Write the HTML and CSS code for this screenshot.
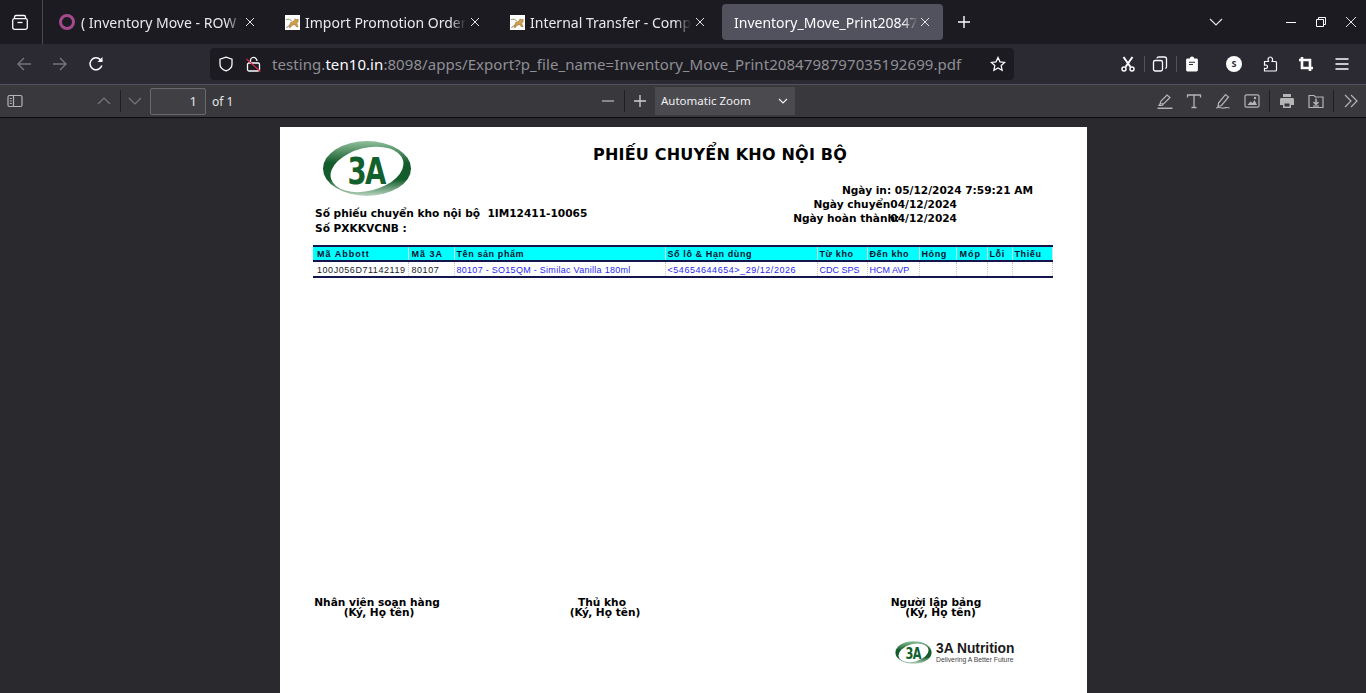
FILE: index.html
```html
<!DOCTYPE html>
<html lang="en">
<head>
  <meta charset="UTF-8" />
  <meta name="viewport" content="width=device-width, initial-scale=1" />
  <title>Inventory_Move_Print2084798797035192699.pdf</title>
  <link rel="stylesheet" href="styles.css">
</head>
<body>
  <svg class="defs" width="0" height="0">
    <defs>
      <symbol id="tomcat" viewBox="0 0 16 16">
        <rect width="16" height="16" fill="#fff"/>
        <path d="M1.500 13.500l3.500-2.500 1-3 3-1 2-3 1 1 2-.5v2.500l-1.500 2 1.500 3.500h-2l-1.500-2.500-3 1-2 2.500H4.500l1-2.500-2 1z" fill="#d3a04a" stroke="#7a5a24" stroke-width=".5"/>
        <path d="M1 5c3-1 5-.5 6 1.500" fill="none" stroke="#8a9460" stroke-width="1"/>
      </symbol>
      <linearGradient id="swoosh" x1="0" y1="0" x2="0" y2="1">
        <stop offset="0" stop-color="#8fbf9b"/>
        <stop offset=".4" stop-color="#145c2b"/>
        <stop offset=".7" stop-color="#145c2b"/>
        <stop offset="1" stop-color="#b9d6c0"/>
      </linearGradient>
      <symbol id="logo3a" viewBox="0 0 92 58">
        <ellipse cx="46" cy="29" rx="45" ry="28" fill="url(#swoosh)"/>
        <ellipse cx="46" cy="30" rx="38" ry="22" fill="#fff" transform="rotate(-14 46 30)"/>
        <text transform="translate(45 45) scale(.94 1.28)" class="logo-mark" text-anchor="middle">3A</text>
      </symbol>
    </defs>
  </svg>

  <header class="tabbar">
    <div class="tab-view">
      <svg class="ico" viewBox="0 0 16 16" fill="none" stroke="currentColor" stroke-width="1.300"><path d="M2.500 4.500V3c0-.9.600-1.500 1.500-1.500h8c.9 0 1.500.6 1.500 1.500v1.500"/><rect x=".7" y="4.700" width="14.600" height="10.600" rx="1.800"/><path d="M5.500 8.500h5"/></svg>
    </div>
    <div class="tabs">
      <div class="tab">
        <span class="ring"></span>
        <span class="tab-title">( Inventory Move - ROW )</span>
        <svg class="tab-x" viewBox="0 0 10 10"><path d="M1 1l8 8M9 1l-8 8"/></svg>
      </div>
      <div class="tab">
        <svg class="favicon"><use href="#tomcat"/></svg>
        <span class="tab-title">Import Promotion Order</span>
        <svg class="tab-x" viewBox="0 0 10 10"><path d="M1 1l8 8M9 1l-8 8"/></svg>
      </div>
      <div class="tab">
        <svg class="favicon"><use href="#tomcat"/></svg>
        <span class="tab-title">Internal Transfer - Compl</span>
        <svg class="tab-x" viewBox="0 0 10 10"><path d="M1 1l8 8M9 1l-8 8"/></svg>
      </div>
      <div class="tab active">
        <span class="tab-title">Inventory_Move_Print2084798</span>
        <svg class="tab-x" viewBox="0 0 10 10"><path d="M1 1l8 8M9 1l-8 8"/></svg>
      </div>
      <svg class="new-tab" viewBox="0 0 14 14" fill="none" stroke="currentColor" stroke-width="1.400"><path d="M7 1v12M1 7h12"/></svg>
    </div>
    <svg class="tab-list" viewBox="0 0 14 10" fill="none" stroke="currentColor" stroke-width="1.200"><path d="M1 2l6 6 6-6"/></svg>
    <div class="win-btns">
      <svg viewBox="0 0 12 12" fill="none" stroke="currentColor"><path d="M1 6.500h10"/></svg>
      <svg viewBox="0 0 12 12" fill="none" stroke="currentColor"><path d="M1.500 3.500h7v7h-7zM3.500 3.500v-2h7v7h-2"/></svg>
      <svg viewBox="0 0 12 12" fill="none" stroke="currentColor" stroke-width=".9"><path d="M1 1l10 10M11 1L1 11"/></svg>
    </div>
  </header>

  <nav class="navbar">
    <div class="nav-arrows">
      <svg class="ico dim" viewBox="0 0 16 16" fill="none" stroke="currentColor" stroke-width="1.400"><path d="M15 8H2M8 2L2 8l6 6"/></svg>
      <svg class="ico dim" viewBox="0 0 16 16" fill="none" stroke="currentColor" stroke-width="1.400"><path d="M1 8h13M8 2l6 6-6 6"/></svg>
      <svg class="ico" viewBox="0 0 16 16" fill="none" stroke="currentColor" stroke-width="1.500"><path d="M13.800 9.500A6 6 0 1 1 12.300 3.600L14 5.200"/><path d="M14.500 1v5h-5" fill="currentColor" stroke="none"/></svg>
    </div>
    <div class="urlbar">
      <svg class="ico" viewBox="0 0 16 16" fill="none" stroke="currentColor" stroke-width="1.300"><path d="M8 1.200l6 2v5c0 3.400-2.600 5.500-6 6.600-3.400-1.100-6-3.200-6-6.600v-5z"/></svg>
      <svg class="ico lock" viewBox="0 0 16 16" fill="none" stroke="currentColor" stroke-width="1.300"><rect x="1.500" y="7" width="12" height="8" rx="1.500"/><path d="M4.500 7V4.500a3 3 0 0 1 5.500-1.800c.6.600 1 1.500 1 2.300"/><path d="M.5 3l14 12.500" stroke="#e22850" stroke-width="1.200"/></svg>
      <span class="url"><span class="muted">testing.</span>ten10.in<span class="muted">:8098/apps/Export?p_file_name=Inventory_Move_Print2084798797035192699.pdf</span></span>
      <svg class="ico star" viewBox="0 0 16 16" fill="none" stroke="currentColor" stroke-width="1.300"><path d="M8 1.500l2 4.300 4.700.6-3.500 3.200.9 4.700L8 12l-4.100 2.300.9-4.700L1.300 6.400 6 5.800z"/></svg>
    </div>
    <div class="nav-tools">
      <svg class="ico" viewBox="0 0 16 16" fill="none" stroke="currentColor" stroke-width="1.500"><path d="M3.500 1l7 10M12.500 1l-7 10" stroke-width="2"/><circle cx="4" cy="13" r="2"/><circle cx="12" cy="13" r="2"/></svg>
      <span class="sep"></span>
      <svg class="ico" viewBox="0 0 16 16" fill="none" stroke="currentColor" stroke-width="1.300"><rect x="1.500" y="4.500" width="9" height="10.500" rx="1.800"/><path d="M5 2.500c0-1 .7-1.500 1.500-1.500h6c1.200 0 2 .8 2 2v8c0 .8-.5 1.300-1.200 1.500"/></svg>
      <span class="sep"></span>
      <svg class="ico" viewBox="0 0 16 16"><path d="M3.500 2.500h2.300C6 1.300 6.800.6 8 .6s2 .7 2.200 1.900h2.300c.8 0 1.400.6 1.400 1.400v10.200c0 .8-.6 1.400-1.400 1.400h-9c-.8 0-1.400-.6-1.400-1.400V3.900c0-.8.600-1.400 1.400-1.400z" fill="currentColor"/><path d="M5 6.200h6M5 8.500h4" stroke="#2b2a33" stroke-width="1.100"/></svg>
      <span class="avatar">S</span>
      <svg class="ico" viewBox="0 0 16 16" fill="none" stroke="currentColor" stroke-width="1.200"><path d="M2.500 15v-2.700c2 .6 3-.4 3-1.600S4.500 8.600 2.500 9.200V5.500H6.500C5.500 3.500 6.300 1 8.300 1s2.800 2.500 1.800 4.500h3.400c.6 0 1 .4 1 1V14c0 .6-.4 1-1 1z"/></svg>
      <svg class="ico" viewBox="0 0 16 16" fill="none" stroke="currentColor" stroke-width="2.600"><path d="M1 4h11v11M4 1v11h11"/></svg>
      <svg class="ico" viewBox="0 0 16 16" fill="none" stroke="currentColor" stroke-width="1.400"><path d="M1.500 3h13M1.500 8h13M1.500 13h13"/></svg>
    </div>
  </nav>

  <div class="pdf-toolbar">
    <div class="pager">
      <svg class="ico tool" viewBox="0 0 16 16" fill="none" stroke="currentColor" stroke-width="1.200"><rect x="1" y="2.500" width="14" height="11" rx="1.500"/><path d="M6.500 2.500v11M2.800 5.500h2M2.800 8h2M2.800 10.500h2"/></svg>
      <svg class="ico faint up-btn" viewBox="0 0 16 16" fill="none" stroke="currentColor" stroke-width="1.200"><path d="M2 11l6-6 6 6"/></svg>
      <span class="sep dark"></span>
      <svg class="ico faint" viewBox="0 0 16 16" fill="none" stroke="currentColor" stroke-width="1.200"><path d="M2 5l6 6 6-6"/></svg>
      <span class="page-input">1</span>
      <span class="page-of">of 1</span>
    </div>
    <div class="zoom">
      <svg class="ico tool" viewBox="0 0 16 16" fill="none" stroke="currentColor" stroke-width="1.300"><path d="M2 8h12"/></svg>
      <span class="sep dark"></span>
      <svg class="ico plus" viewBox="0 0 16 16" fill="none" stroke="currentColor" stroke-width="1.300"><path d="M2 8h12M8 2v12"/></svg>
      <div class="zoom-select">
        <span>Automatic Zoom</span>
        <svg viewBox="0 0 10 6" fill="none" stroke="currentColor" stroke-width="1.200"><path d="M1 1l4 4 4-4"/></svg>
      </div>
    </div>
    <div class="tools">
      <svg class="ico tool" viewBox="0 0 16 16" fill="none" stroke="currentColor" stroke-width="1.200"><path d="M3 11l1-3 6-6 3 2.500-6 6z"/><path d="M3 11l-1 1.500h3L6.500 11"/><path d="M.5 15.300h15" stroke-width="1.500"/></svg>
      <svg class="ico tool" viewBox="0 0 16 16" fill="none" stroke="currentColor" stroke-width="1.300"><path d="M1.500 4.500V2h13v2.500M8 2v12.500M5.500 14.500h5"/></svg>
      <svg class="ico tool" viewBox="0 0 16 16" fill="none" stroke="currentColor" stroke-width="1.200"><path d="M3.500 10l7-8.500 3 2.500-7 8.500-3.500 1z"/><path d="M1 15c3-1.500 5 .5 8 0s3-1 5.500 0"/></svg>
      <svg class="ico tool" viewBox="0 0 16 16"><rect x="1" y="1.800" width="14" height="12.400" rx="1.500" fill="none" stroke="currentColor" stroke-width="1.200"/><path d="M3.500 12l3-3.500 2 1.500 2-3 2.500 5z" fill="currentColor"/><circle cx="11" cy="5" r="1.200" fill="currentColor"/></svg>
      <span class="sep dark"></span>
      <svg class="ico tool" viewBox="0 0 16 16"><path d="M4 1h8v3H4zM2.500 5h11c1 0 1.500.6 1.500 1.500V12h-3v3H4v-3H1V6.500C1 5.600 1.500 5 2.500 5z" fill="currentColor"/><path d="M5.500 10.500h5v3h-5z" fill="#38383d"/></svg>
      <svg class="ico tool" viewBox="0 0 16 16" fill="none" stroke="currentColor" stroke-width="1.200"><path d="M1 4V2.500h5l1.500 1.500h7.500v10.500H1z"/><path d="M8 5.500v6M5.500 9L8 11.500 10.500 9" stroke-width="1.500"/><path d="M5 13h6"/></svg>
      <span class="sep dark"></span>
      <svg class="ico tool" viewBox="0 0 16 16" fill="none" stroke="currentColor" stroke-width="1.200"><path d="M2 2l6 6-6 6M8 2l6 6-6 6"/></svg>
    </div>
  </div>

  <main class="viewer">
    <article class="page">
      <section class="doc-head">
        <div class="doc-left">
          <svg class="logo"><use href="#logo3a"/></svg>
          <p class="ref-line">Số phiếu chuyển kho nội bộ&nbsp; 1IM12411-10065</p>
          <p class="ref-line">Số PXKKVCNB :</p>
        </div>
        <div class="doc-right">
          <h1>PHIẾU CHUYỂN KHO NỘI BỘ</h1>
          <p class="date-printed">Ngày in: 05/12/2024 7:59:21 AM</p>
          <p class="date-row"><span>Ngày chuyển</span><span>04/12/2024</span></p>
          <p class="date-row over"><span>Ngày hoàn thành:</span><span>04/12/2024</span></p>
        </div>
      </section>

      <table class="moves">
        <colgroup>
          <col class="c1"><col class="c2"><col class="c3"><col class="c4"><col class="c5">
          <col class="c6"><col class="c7"><col class="c8"><col class="c9"><col class="c10">
        </colgroup>
        <thead>
          <tr>
            <th class="wide">Mã Abbott</th><th class="wide">Mã 3A</th><th>Tên sản phẩm</th><th>Số lô &amp; Hạn dùng</th><th>Từ kho</th>
            <th>Đến kho</th><th>Hỏng</th><th class="wide">Móp</th><th>Lỗi</th><th>Thiếu</th>
          </tr>
        </thead>
        <tbody>
          <tr>
            <td class="code">100J056D71142119</td><td class="code">80107</td>
            <td class="name">80107 - SO15QM - Similac Vanilla 180ml</td><td class="lot">&lt;54654644654&gt;_29/12/2026</td>
            <td>CDC SPS</td><td>HCM AVP</td><td></td><td></td><td></td><td></td>
          </tr>
        </tbody>
      </table>

      <section class="signs">
        <div class="sign s1"><p>Nhân viên soạn hàng</p><p class="sub">(Ký, Họ tên)</p></div>
        <div class="sign s2"><p>Thủ kho</p><p class="sub">(Ký, Họ tên)</p></div>
        <div class="sign s3"><p>Người lập bảng</p><p class="sub">(Ký, Họ tên)</p></div>
      </section>

      <footer class="brand">
        <svg class="brand-logo"><use href="#logo3a"/></svg>
        <div>
          <div class="brand-name">3A Nutrition</div>
          <div class="brand-tag">Delivering A Better Future</div>
        </div>
      </footer>
    </article>
  </main>
</body>
</html>
```

FILE: styles.css
```css
* {
  box-sizing: border-box;
}
html, body {
  margin: 0;
  height: 693px;
  overflow: hidden;
}
body {
  font-family: "Noto Sans", sans-serif;
  color: #fbfbfe;
  background: #2a2a2e;
}
p, h1 {
  margin: 0;
}
.defs {
  position: absolute;
}
.logo-mark {
  font-family: "DejaVu Sans", sans-serif;
  font-weight: 700;
  font-size: 30px;
  letter-spacing: -2px;
  fill: #12602c;
}
.ico {
  width: 16px;
  height: 16px;
  flex: none;
}
.dim {
  color: #74747a;
}
.faint {
  color: #77777c;
}
.tool {
  color: #b5b5b8;
}

/* tab strip */
.tabbar {
  height: 44px;
  background: #1c1b22;
  display: flex;
  align-items: center;
}
.tab-view {
  width: 43px;
  height: 44px;
  flex: none;
  border-right: 1px solid #4a4950;
  display: flex;
  align-items: center;
  padding-left: 12px;
}
.tabs {
  display: flex;
  align-items: center;
  gap: 4px;
  margin-left: 4px;
}
.tab {
  width: 221px;
  height: 36px;
  flex: none;
  display: flex;
  align-items: center;
  padding-left: 12px;
  border-radius: 4px;
  position: relative;
}
.tab.active {
  background: #52525e;
}
.ring {
  width: 16px;
  height: 16px;
  flex: none;
  border: 3.5px solid #a5498d;
  border-radius: 50%;
}
.favicon {
  width: 15px;
  height: 15px;
  margin-left: 1px;
  flex: none;
}
.tab-title {
  margin-left: 6px;
  margin-top: 2px;
  width: 161px;
  overflow: hidden;
  white-space: nowrap;
  font-size: 14px;
  line-height: 20px;
  color: #e9e9ec;
  -webkit-mask-image: linear-gradient(90deg, #000 145px, transparent 161px);
  mask-image: linear-gradient(90deg, #000 145px, transparent 161px);
}
.favicon + .tab-title {
  margin-left: 5px;
}
.tab.active .tab-title {
  margin-left: 0;
  width: 184px;
  color: #fbfbfe;
  -webkit-mask-image: linear-gradient(90deg, #000 168px, transparent 184px);
  mask-image: linear-gradient(90deg, #000 168px, transparent 184px);
}
.tab-x {
  position: absolute;
  left: 198px;
  top: 13px;
  width: 10px;
  height: 10px;
  fill: none;
  stroke: #e4e4e8;
  stroke-width: 1;
}
.new-tab {
  width: 14px;
  height: 14px;
  margin-left: 10px;
}
.tab-list {
  width: 14px;
  height: 10px;
  position: absolute;
  left: 1209px;
  top: 17px;
  color: #e4e4e8;
}
.win-btns {
  margin-left: auto;
  display: flex;
  gap: 18px;
  padding-right: 9px;
}
.win-btns svg {
  width: 12px;
  height: 12px;
}

/* address row */
.navbar {
  height: 40px;
  background: #2b2a33;
  display: flex;
  align-items: center;
  padding-left: 16px;
}
.nav-arrows {
  display: flex;
  gap: 20px;
  flex: none;
}
.urlbar {
  width: 804px;
  height: 32px;
  flex: none;
  margin-left: 106px;
  background: #1c1b22;
  border-radius: 4px;
  display: flex;
  align-items: center;
  padding-left: 8px;
}
.lock {
  margin-left: 12px;
}
.url {
  margin-left: 10px;
  font-size: 15px;
  line-height: 20px;
  letter-spacing: .065px;
  white-space: nowrap;
}
.muted {
  color: #8f8f94;
}
.star {
  margin-left: auto;
  margin-right: 8px;
}
.nav-tools {
  display: flex;
  align-items: center;
  margin-left: 106px;
  flex: none;
}
.sep {
  width: 1px;
  height: 16px;
  background: #52525e;
  margin: 0 7px 0 8px;
  flex: none;
}
.avatar {
  width: 16px;
  height: 16px;
  margin-left: 26px;
  margin-right: 20px;
  border-radius: 50%;
  background: #fbfbfe;
  color: #2b2a33;
  font-size: 9px;
  font-weight: 700;
  line-height: 16px;
  text-align: center;
  flex: none;
}
.nav-tools .avatar ~ .ico {
  margin-right: 20px;
}

/* pdf toolbar */
.pdf-toolbar {
  height: 34px;
  background: #38383d;
  border-top: 1px solid #52525e;
  border-bottom: 1px solid #0c0c0d;
  display: flex;
  align-items: center;
}
.sep.dark {
  background: #1f1f22;
  height: 22px;
  margin: 0 7px 0 8px;
}
.pager {
  width: 600px;
  display: flex;
  align-items: center;
  padding-left: 7px;
  flex: none;
}
.pager .sep.dark {
  margin-right: 6px;
}
.up-btn {
  margin-left: 73px;
}
.page-input {
  width: 56px;
  height: 27px;
  margin-left: 7px;
  background: #3f3f44;
  border: 1px solid #6a6a6e;
  border-radius: 2px;
  font-size: 13px;
  line-height: 25px;
  text-align: right;
  padding-right: 8px;
  color: #e6e6e8;
}
.page-of {
  margin-left: 6px;
  font-size: 12px;
  color: #e6e6e8;
}
.zoom {
  display: flex;
  align-items: center;
  flex: none;
}
.plus {
  color: #d0d0d2;
}
.zoom-select {
  width: 140px;
  height: 28px;
  margin-left: 7px;
  background: #4a4a4f;
  display: flex;
  align-items: center;
  justify-content: space-between;
  padding: 0 7px 2px 6px;
  font-size: 11.500px;
  color: #f0f0f2;
}
.zoom-select svg {
  width: 10px;
  height: 6px;
  margin-top: 2px;
}
.tools {
  display: flex;
  align-items: center;
  margin-left: 362px;
  gap: 13px;
}
.tools .sep.dark {
  margin: 0 -4px 0 -4px;
}

/* pdf page */
.viewer {
  height: 575px;
  padding-top: 9px;
  overflow: hidden;
}
.page {
  width: 807px;
  height: 640px;
  margin-left: 280px;
  background: #fff;
  color: #000;
  font-family: "DejaVu Sans", sans-serif;
  padding: 13px 35px 0 33px;
}
.doc-head {
  display: grid;
  grid-template-columns: 300px 1fr;
  height: 105px;
  font-size: 10.600px;
  font-weight: 700;
  line-height: 14.500px;
}
.doc-left {
  padding-left: 2px;
}
.logo {
  display: block;
  width: 90px;
  height: 57px;
  margin: 0 0 9px 7px;
}
.doc-right {
  padding-top: 5px;
}
h1 {
  font-size: 16px;
  line-height: 20px;
  margin-left: -20px;
  letter-spacing: .2px;
}
.date-printed {
  text-align: right;
  margin-top: 18px;
  padding-right: 19px;
}
.date-row {
  display: flex;
  justify-content: flex-end;
  padding-right: 95px;
  margin-top: -1px;
}
.date-row.over {
  margin-top: 0;
}
.date-row.over span:first-child {
  margin-right: -9px;
}
.moves {
  width: 739px;
  table-layout: fixed;
  border-collapse: collapse;
  font-family: "Liberation Sans", sans-serif;
  font-size: 9px;
}
.c1 { width: 95px; }
.c2 { width: 46px; }
.c3 { width: 211px; }
.c4 { width: 152px; }
.c5 { width: 50px; }
.c6 { width: 52px; }
.c7 { width: 37px; }
.c8 { width: 31px; }
.c9 { width: 25px; }
.c10 { width: 40px; }
.moves th {
  height: 15px;
  padding: 0 0 0 2px;
  background: #00ffff;
  border-top: 2px solid #14144e;
  border-bottom: 2px solid #14144e;
  border-right: 1px solid #c8e8e8;
  color: #0a1030;
  font-weight: 700;
  text-align: left;
  white-space: nowrap;
  overflow: hidden;
  letter-spacing: .6px;
}
.moves th.wide {
  letter-spacing: 1px;
  padding-left: 3px;
}
.moves th:first-child {
  padding-left: 4px;
}
.moves td {
  height: 16px;
  padding: 1px 0 0 2px;
  border-bottom: 2px solid #14144e;
  border-right: 1px dotted #c9c9c9;
  color: #2a1ff0;
  white-space: nowrap;
  overflow: hidden;
}
.moves td.code {
  color: #1a1a2a;
  letter-spacing: .55px;
  padding-left: 3px;
}
.moves td:first-child {
  padding-left: 4px;
}
.moves td.name {
  letter-spacing: .28px;
}
.moves td.lot {
  letter-spacing: .54px;
}
.signs {
  display: flex;
  margin-top: 319px;
  font-size: 10.600px;
  font-weight: 700;
  line-height: 10px;
  text-align: center;
  white-space: nowrap;
}
.sign {
  flex: none;
}
.s1 {
  width: 126px;
  margin-left: 1px;
}
.s2 {
  width: 74px;
  margin-left: 128px;
}
.s3 {
  width: 92px;
  margin-left: 248px;
}
.s1 .sub {
  padding-left: 4px;
}
.s2 p:first-child {
  padding-right: 6px;
}
.s3 .sub {
  padding-left: 9px;
}
.brand {
  display: flex;
  align-items: center;
  gap: 4px;
  margin-top: 23px;
  margin-left: 582px;
  color: #1a1a1a;
  font-family: "Liberation Sans", sans-serif;
}
.brand-logo {
  width: 37px;
  height: 25px;
}
.brand-name {
  font-size: 13.800px;
  font-weight: 700;
  line-height: 15px;
}
.brand-tag {
  font-size: 6.800px;
  line-height: 8px;
  color: #444;
}
```
